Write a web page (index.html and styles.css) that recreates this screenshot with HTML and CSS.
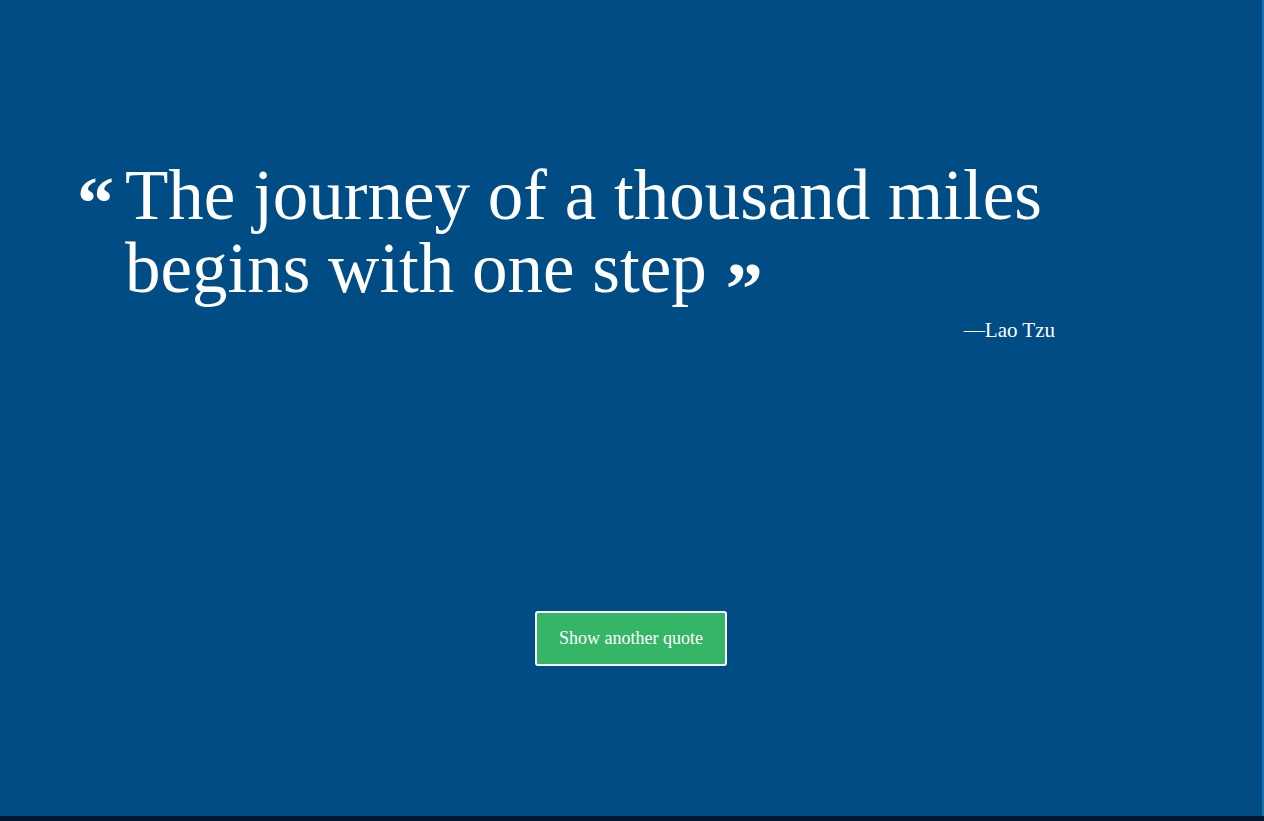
FILE: index.html
```html
<!DOCTYPE html>
<html lang="en">
<head>
<meta charset="utf-8">
<title>Random Quote</title>
<link rel="stylesheet" href="styles.css">
</head>
<body>
<div class="page">
  <main class="stage">
    <section class="quote-box">
      <blockquote class="quote">
        <span class="mark open">&ldquo;</span>
        <p class="text">The journey of a thousand miles begins with one step<span class="mark close">&rdquo;</span></p>
      </blockquote>
      <p class="author">&mdash;Lao Tzu</p>
    </section>
    <div class="actions">
      <button class="btn" type="button">Show another quote</button>
    </div>
  </main>
  <div class="edge"></div>
</div>
<div class="bottom"></div>
</body>
</html>
```
FILE: styles.css
```css
html, body {
  margin: 0;
  padding: 0;
  height: 100%;
}
body {
  background: #004c84;
  color: #fff;
  font-family: "Liberation Serif", "DejaVu Serif", serif;
  display: flex;
  flex-direction: column;
  overflow: hidden;
}
.page {
  flex: 1;
  display: flex;
}
.stage {
  flex: 1;
  display: flex;
  flex-direction: column;
}
.edge {
  width: 2px;
  background: #1872b0;
}
.bottom {
  height: 5px;
  background: #00182f;
}
.quote-box {
  padding: 160px 0 0 80px;
  width: 975px;
}
.quote {
  margin: 0;
  display: flex;
  align-items: flex-start;
}
.mark {
  font-weight: bold;
  font-size: 74px;
  line-height: 1;
}
.mark.open {
  width: 48px;
  flex: none;
  margin-left: -3px;
  padding-top: 6px;
}
.mark.close {
  margin-left: 19px;
  position: relative;
  top: 22px;
}
.text {
  margin: 0;
  font-size: 71px;
  line-height: 70px;
  width: 960px;
}
.author {
  margin: 14px 0 0;
  text-align: right;
  font-size: 21px;
}
.actions {
  margin-top: 268px;
  display: flex;
  justify-content: center;
}
.btn {
  font-family: inherit;
  font-size: 18px;
  color: #fff;
  background: #35b566;
  border: 2px solid #fff;
  border-radius: 3px;
  width: 192px;
  height: 55px;
  cursor: pointer;
}
```
